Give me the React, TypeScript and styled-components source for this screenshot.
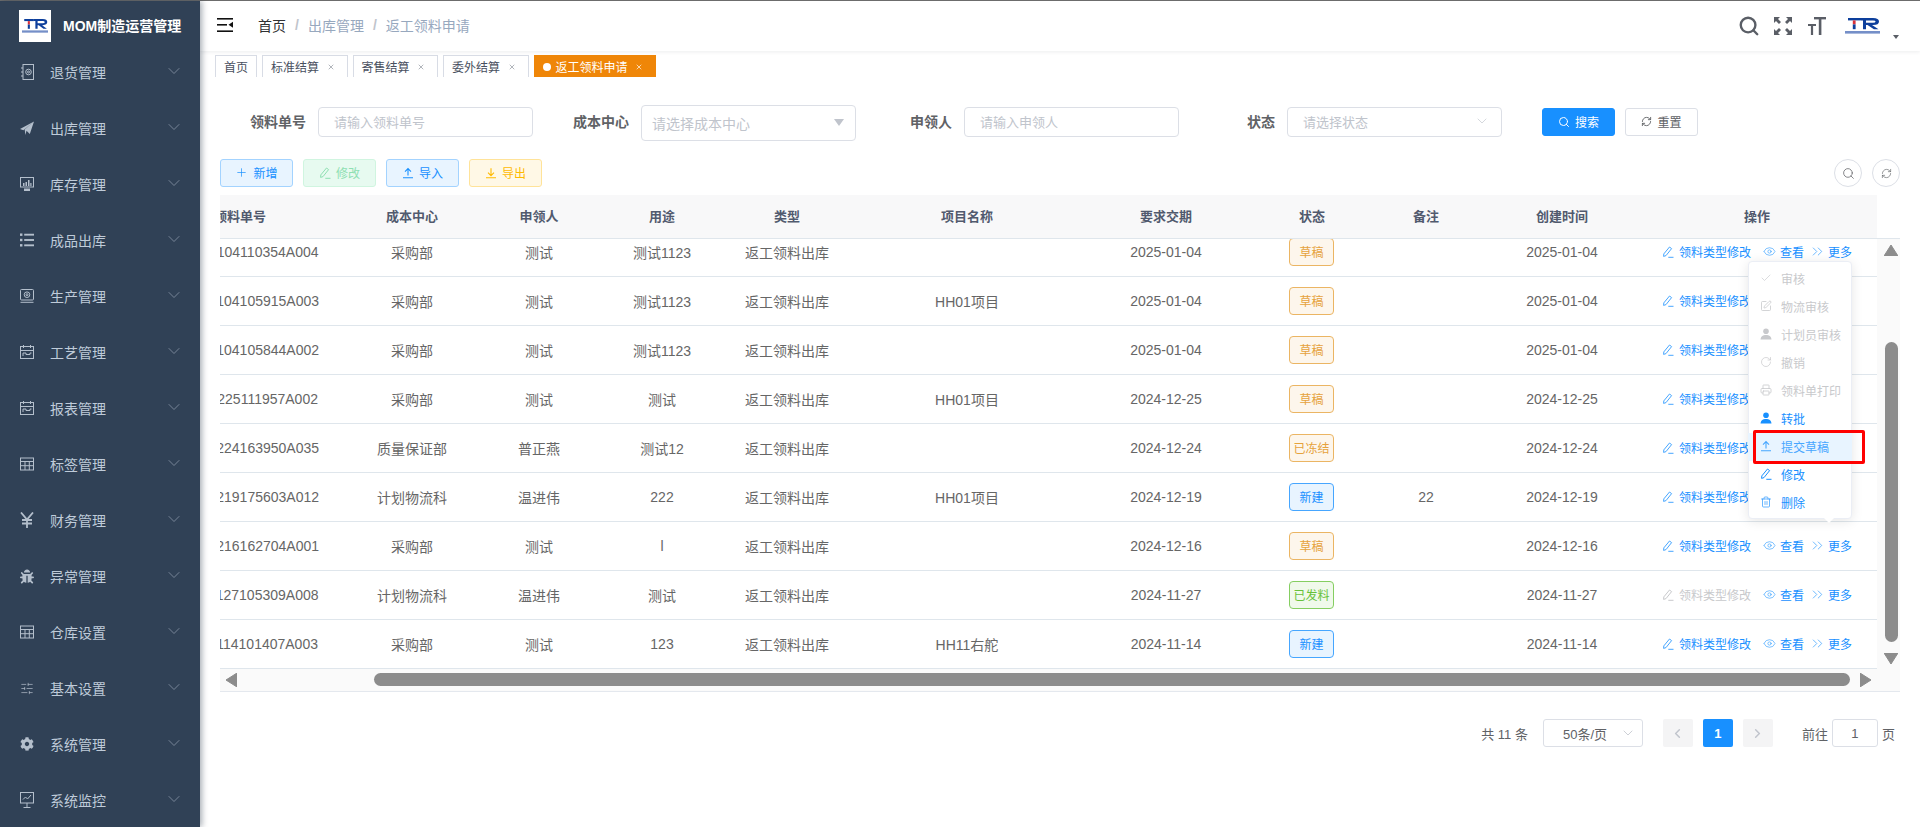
import React from "react";
import styled, { createGlobalStyle } from "styled-components";
import {
  Search, RefreshCw, ChevronDown, ChevronLeft, ChevronRight, ChevronsRight, Eye, Plus, X,
  Check, SquarePen, RotateCw, Printer, Trash2, SlidersHorizontal,
} from "lucide-react";
import { FaCog, FaBug } from "react-icons/fa";

const Global = createGlobalStyle`
  html, body { margin: 0; padding: 0; height: 100%; background: #fff; }
  body { font-family: "Liberation Sans", "Noto Sans CJK SC", sans-serif; font-size: 14px; color: #606266; }
  * { box-sizing: border-box; }
`;

const Root = styled.div`
  position: relative; height: 100vh; overflow: hidden; display: flex; flex-direction: column;
`;
const TopLine = styled.div`height: 1px; background: #6e6e6e; flex: none;`;
const Shell = styled.div`flex: 1; display: flex; min-height: 0;`;

/* sidebar */
const Sidebar = styled.aside`
  width: 200px; flex: none; background: #304156; position: relative; z-index: 2;
  box-shadow: 2px 0 6px rgba(0, 21, 41, .35); overflow: hidden;
`;
const Brand = styled.div`height: 44px; display: flex; align-items: center; padding: 6px 0 0 19px; gap: 12px;`;
const BrandBox = styled.div`width: 32px; height: 32px; background: #fff; display: flex; align-items: center; justify-content: center;`;
const BrandName = styled.div`color: #fff; font-weight: 700; font-size: 14px; white-space: nowrap; line-height: 20px;`;
const MenuItem = styled.div`
  height: 56px; display: flex; align-items: center; padding: 0 16px 0 20px; color: #bfcbd9; font-size: 14px;
`;
const MenuGlyph = styled.span`width: 14px; height: 14px; margin: -2px 16px 0 0; display: flex; align-items: center; justify-content: center; color: #b4bfcc; flex: none;`;
const MenuLabel = styled.span`flex: 1; margin-top: -2px;`;
const MenuArrow = styled(ChevronDown)`color: #8492a3; margin-bottom: 5px;`;

/* main */
const Main = styled.main`flex: 1; min-width: 0; display: flex; flex-direction: column;`;
const TopBar = styled.header`
  height: 50px; flex: none; display: flex; align-items: center; padding: 0 21px 2px 17px; background: #fff;
  box-shadow: 0 1px 4px rgba(0, 21, 41, .08); position: relative; z-index: 1;
`;
const Crumbs = styled.nav`display: flex; align-items: center; margin-left: 25px; font-size: 14px; flex: 1;`;
const Crumb = styled.span<{ $strong?: boolean }>`color: ${p => (p.$strong ? "#303133" : "#97a8be")};`;
const CrumbSep = styled.span`margin: 0 9px; color: #c0c4cc; font-weight: 700;`;
const HeadTools = styled.div`display: flex; align-items: center; gap: 16px; color: #5a5e66; margin-top: 2px;`;
const HeadSearch = styled(Search)`margin: -2px;`;
const HeadLogo = styled.div`margin-left: 3px; display: flex;`;
const HeadCaret = styled.span`
  width: 0; height: 0; border-left: 3.5px solid transparent; border-right: 3.5px solid transparent;
  border-top: 4px solid #5a5e66; margin: 22px 0 0 -3px;
`;

const TagBar = styled.div`
  height: 33px; flex: none; background: #fff; padding: 4px 0 0 15px; display: flex; align-items: flex-start; gap: 5px;
  box-shadow: 0 1px 3px rgba(0, 21, 41, .16), 0 0 3px rgba(0, 0, 0, .03);
`;
const Tab = styled.div<{ $active?: boolean }>`
  height: 22px; display: flex; align-items: center; font-size: 12px; padding: 0 8px;
  border: 1px solid ${p => (p.$active ? "#ef8608" : "#d8dce5")}; border-bottom: none;
  background: ${p => (p.$active ? "#ef8608" : "#fff")}; color: ${p => (p.$active ? "#fff" : "#495060")};
`;
const TabDot = styled.span`width: 8px; height: 8px; border-radius: 50%; background: #fff; margin-right: 5px;`;
const TabClose = styled.span<{ $active?: boolean }>`
  width: 16px; margin-left: 3.5px; display: flex; justify-content: center; color: ${p => (p.$active ? "#fff" : "#8a8f99")};
`;

const Content = styled.section`flex: 1; min-height: 0; padding: 0 20px; background: #fff;`;
const SearchRow = styled.form`height: 36px; margin-top: 20px; display: flex; align-items: center;`;
const FieldLabel = styled.label<{ $w: number }>`
  width: ${p => p.$w}px; text-align: right; font-weight: 700; font-size: 14px; color: #606266; margin-right: 12px; flex: none; padding-bottom: 2px;
`;
const InputBox = styled.div<{ $tall?: boolean; $size?: number }>`
  width: 215px; height: ${p => (p.$tall ? 36 : 30)}px; border: 1px solid #dcdfe6; border-radius: 4px; display: flex; align-items: center;
  justify-content: space-between; padding: 0 11px ${p => (p.$tall ? 1 : 2)}px ${p => (p.$tall ? 10 : 15)}px;
  margin-top: ${p => (p.$tall ? 2 : 0)}px;
  color: #c0c4cc; font-size: ${p => p.$size ?? 13}px; background: #fff; flex: none;
`;
const TinyCaret = styled.span`
  width: 0; height: 0; border-left: 5px solid transparent; border-right: 5px solid transparent; border-top: 7px solid #c0c4cc;
`;
const Action = styled.button<{ $bg: string; $bd: string; $fg: string }>`
  width: 73px; height: 28px; border: 1px solid ${p => p.$bd}; background: ${p => p.$bg}; color: ${p => p.$fg};
  border-radius: 3px; font: inherit; font-size: 12px; display: inline-flex; align-items: center; justify-content: center; gap: 5px; padding: 0 0 1px;
  flex: none;
`;
const SearchAction = styled(Action)`margin-left: 40px;`;
const ResetAction = styled(Action)`margin-left: 10px;`;
const Toolbar = styled.div`height: 28px; margin-top: 19px; display: flex; align-items: center; gap: 10px;`;
const RoundBtn = styled.button`
  width: 28px; height: 28px; border: 1px solid #dcdfe6; border-radius: 50%; background: #fff; color: #606266;
  display: inline-flex; align-items: center; justify-content: center; padding: 0;
`;
const ToolSpacer = styled.div`flex: 1;`;

/* table */
const TableFrame = styled.div`
  margin-top: 8px; display: grid; grid-template-columns: 1657px 23px; grid-template-rows: 44px 430px 23px;
`;
const HeadClip = styled.div`grid-column: 1; grid-row: 1; overflow: hidden; background: #f8f8f9; border-bottom: 1px solid #dfe6ec;`;
const HeadGutter = styled.div`grid-column: 2; grid-row: 1; border-bottom: 1px solid #dfe6ec;`;
const BodyClip = styled.div`grid-column: 1; grid-row: 2; overflow: hidden;`;
const GridTable = styled.table<{ $top?: number }>`
  width: 1754px; table-layout: fixed; border-collapse: separate; border-spacing: 0;
  margin-left: -97px; margin-top: ${p => p.$top ?? 0}px;
`;
const Th = styled.th`
  height: 43px; padding: 0 0 2px; text-align: center; font-size: 13px; font-weight: 700; color: #515a6e;
`;
const Td = styled.td`
  height: 49px; padding: 0 0 1px; text-align: center; font-size: 14px; color: #666; border-bottom: 1px solid #dfe6ec; white-space: nowrap;
`;
const StatusTag = styled.span<{ $bg: string; $fg: string; $bd: string }>`
  display: inline-flex; align-items: center; justify-content: center; width: 45px; height: 28px; font-size: 12px; margin-left: -1px;
  border: 1px solid ${p => p.$bd}; background: ${p => p.$bg}; color: ${p => p.$fg}; border-radius: 4px; vertical-align: middle;
`;
const RowOps = styled.div`display: flex; justify-content: center; align-items: center; gap: 12px; font-size: 12px;`;
const RowLink = styled.span<{ $off?: boolean }>`
  display: inline-flex; align-items: center; gap: 4px; color: ${p => (p.$off ? "#c8c9cc" : "#1890ff")};
  svg { color: ${p => (p.$off ? "#c8c9cc" : "#46a6ff")}; }
`;
const RowChevrons = styled(ChevronsRight)`margin: 0 -2px 0 -7px;`;
const RowPencil = styled.span`display: flex; margin-right: 1px;`;

const VTrack = styled.div`
  grid-column: 2; grid-row: 2 / 4; background: #fafafa; border-bottom: 1px solid #e4e8ee; display: flex; flex-direction: column; align-items: center; padding: 6px 0 0 5px;
`;
const VThumb = styled.div`width: 13px; height: 300px; margin: 86px 0 11px; border-radius: 7px; background: #8c8c8c;`;
const HTrack = styled.div`
  grid-column: 1; grid-row: 3; background: #fafafa; border-bottom: 1px solid #e4e8ee; display: flex; align-items: center; padding: 0 6px 1px 6px;
`;
const HThumb = styled.div`height: 13px; width: 1476px; margin: 0 10px 0 137px; border-radius: 7px; background: #8c8c8c;`;

/* pager */
const Pager = styled.div`
  margin-top: 27px; height: 28px; padding-right: 5px; display: flex; justify-content: flex-end; align-items: center; font-size: 13px; color: #606266;
`;
const PageSize = styled.div`
  width: 100px; height: 28px; margin: 0 20px 0 15px; border: 1px solid #dcdfe6; border-radius: 3px; display: flex; align-items: center;
  justify-content: space-between; padding: 0 6px 0 19px; color: #606266; svg { color: #c0c4cc; }
`;
const PageBtn = styled.div<{ $on?: boolean }>`
  width: 30px; height: 28px; border-radius: 2px; margin-right: 10px; display: flex; align-items: center; justify-content: center;
  font-weight: 700; background: ${p => (p.$on ? "#1890ff" : "#f4f4f5")}; color: ${p => (p.$on ? "#fff" : "#c0c4cc")};
`;
const JumpLabel = styled.span`margin-left: 19px;`;
const JumpBox = styled.div`
  width: 46px; height: 28px; margin: 0 4px; border: 1px solid #dcdfe6; border-radius: 3px; display: flex; align-items: center; justify-content: center;
`;

/* dropdown */
const Dropdown = styled.div`
  position: absolute; left: 1748px; top: 261px; width: 104px; height: 258px; padding: 3px 0; z-index: 5; background: #fff;
  border: 1px solid #ebeef5; border-radius: 4px; box-shadow: 0 2px 12px rgba(0, 0, 0, .1);
  &::after {
    content: ""; position: absolute; left: 75px; bottom: -5px; width: 0; height: 0;
    border-left: 5px solid transparent; border-right: 5px solid transparent; border-top: 5px solid #fff;
  }
`;
const DropItem = styled.div<{ $off?: boolean; $hover?: boolean }>`
  height: 28px; margin: 0 -1px; padding: 0 0 2px 12px; display: flex; align-items: center; gap: 9px; font-size: 12px;
  color: ${p => (p.$off ? "#c8c9cc" : p.$hover ? "#46a6ff" : "#1890ff")}; background: ${p => (p.$hover ? "#e8f4ff" : "transparent")};
  svg { flex: none; }
`;
const Annotation = styled.div`
  position: absolute; left: 1753px; top: 430px; width: 112px; height: 34px; z-index: 6; border: 3px solid #f00; border-radius: 2px;
`;

/* drawings */
const Logo = ({ w, h }: { w: number; h: number }) => (
  <svg width={w} height={h} viewBox="0 0 35 16" preserveAspectRatio="none">
    <rect x="3" y="0" width="13" height="2.400" fill="#0d3f9c" />
    <rect x="7.800" y="2.400" width="2.800" height="4" fill="#d8323c" />
    <rect x="7.800" y="6.400" width="2.800" height="4.800" fill="#0d3f9c" />
    <path fillRule="evenodd" d="M16 0h12q6 0 6 3.500t-6 3.500h-1l6.500 4.200h-4.600L22.500 7H21v4.200h-3V2.400h-2zM21 2.400v2.400h7q2.600 0 2.600-1.200T28 2.400z" fill="#0d3f9c" />
    <rect x="0" y="13" width="35" height="2.600" fill="#3a5fb0" opacity=".7" />
  </svg>
);
const Hamburger = () => (
  <svg width="16" height="14" viewBox="0 0 16 14" fill="#111">
    <rect width="16" height="1.600" />
    <rect y="6" width="10" height="1.600" />
    <path d="M16 3.800v6L11.500 6.800z" />
    <rect y="12.400" width="16" height="1.600" />
  </svg>
);
const Fullscreen = () => (
  <svg width="18" height="18" viewBox="0 0 18 18" fill="currentColor">
    <path d="M0 0h6L4 2l3 3-2 2-3-3-2 2zM18 0v6l-2-2-3 3-2-2 3-3-2-2zM0 18v-6l2 2 3-3 2 2-3 3 2 2zM18 18h-6l2-2-3-3 2-2 3 3 2-2z" />
  </svg>
);
const TextSize = () => (
  <svg width="18" height="18" viewBox="0 0 18 18" fill="currentColor">
    <rect x="6" y="0" width="12" height="2.400" /><rect x="10.800" y="0" width="2.600" height="18" />
    <rect x="0" y="7" width="8" height="2" /><rect x="2.900" y="7" width="2.200" height="11" />
  </svg>
);
const Pencil = ({ s = 12 }: { s?: number }) => (
  <svg width={s} height={s} viewBox="0 0 12 12" fill="none" stroke="currentColor" strokeWidth="1">
    <path d="M7.500 1 L9.600 2.600 L4 9.600 L1.600 10.400 L1.800 7.900 Z" /><path d="M6.300 11.300h5.200" />
  </svg>
);
const Upload = ({ s = 12 }: { s?: number }) => (
  <svg width={s} height={s} viewBox="0 0 12 12" fill="none" stroke="currentColor" strokeWidth="1.100">
    <path d="M1 10.800h10M6 8.600V2M3 4.600 6 1.600l3 3" />
  </svg>
);
const Download = ({ s = 12 }: { s?: number }) => (
  <svg width={s} height={s} viewBox="0 0 12 12" fill="none" stroke="currentColor" strokeWidth="1.100">
    <path d="M1 10.800h10M6 1.200v7M3 5.600l3 3 3-3" />
  </svg>
);
const User = () => (
  <svg width="12" height="12" viewBox="0 0 12 12" fill="currentColor">
    <circle cx="6" cy="3.300" r="2.800" /><path d="M0.500 11.500C1 8 3 7 6 7s5 1 5.500 4.500z" />
  </svg>
);

const line = { fill: "none", stroke: "currentColor", strokeWidth: 1 } as const;
const IconSafe = () => (
  <svg width="14" height="16" viewBox="0 0 14 16" {...line}>
    <rect x="3" y=".5" width="10.500" height="15" /><circle cx="8.500" cy="8" r="2.800" /><circle cx="8.500" cy="8" r="1" />
    <path d="M1 4h2M1 8h2M1 12h2" />
  </svg>
);
const IconPlane = () => (
  <svg width="15" height="15" viewBox="0 0 15 15" fill="currentColor"><path d="M15 0 10.500 13.500 7 10l-1.200 4.500L5 8.500zM15 0 0 8l3.600 1.300z" /></svg>
);
const IconMonitor = () => (
  <svg width="14" height="14" viewBox="0 0 14 14" fill="currentColor">
    <path fillRule="evenodd" d="M0 0h14v10.500H0zM1 1v8.500h12V1z" /><path d="M3 6h1.500v3H3zM5.500 5H7v4H5.500zM8 3h1.500v6H8zM10.300 6h1.200v3h-1.200zM4 11.500h6V14H4z" />
  </svg>
);
const IconList = () => (
  <svg width="15" height="14" viewBox="0 0 15 14" fill="currentColor">
    <rect y="0" width="2.600" height="2.600" /><rect y="5.700" width="2.600" height="2.600" /><rect y="11.400" width="2.600" height="2.600" />
    <rect x="4.500" y=".3" width="10.500" height="2" /><rect x="4.500" y="6" width="10.500" height="2" /><rect x="4.500" y="11.700" width="10.500" height="2" />
  </svg>
);
const IconProd = () => (
  <svg width="14" height="14" viewBox="0 0 14 14" {...line}>
    <rect x=".5" y=".5" width="13" height="10.500" rx="1" /><circle cx="7" cy="5.700" r="2.800" /><circle cx="7" cy="5.700" r="1" /><path d="M.5 13.300h13" />
  </svg>
);
const IconCal = () => (
  <svg width="14" height="14" viewBox="0 0 14 14" {...line}>
    <rect x=".5" y="1.500" width="13" height="12" /><path d="M.5 5.500h13M3.500 0v3M10.500 0v3M3 11V8h3v1.500h4V8h1.500" />
  </svg>
);
const IconGrid = () => (
  <svg width="14" height="14" viewBox="0 0 14 14" {...line}>
    <rect x=".5" y="1" width="13" height="12" /><path d="M.5 4.500h13M.5 8.700h13M5 4.500V13M9.300 4.500V13" />
  </svg>
);
const IconYen = () => (
  <svg width="14" height="16" viewBox="0 0 14 16" fill="none" stroke="currentColor" strokeWidth="1.800">
    <path d="M1 0.500 7 7.500l6-7M7 7.500V16M2 8h10M2 11.500h10" />
  </svg>
);
const IconChart = () => (
  <svg width="14" height="16" viewBox="0 0 14 16" {...line}>
    <rect x=".5" y=".5" width="13" height="10.500" /><path d="M3 7.500l2.500-2.500 2 2 3.500-4M7 11v4M3.500 15.500h7" />
  </svg>
);

const menus: [string, React.ReactNode][] = [
  ["退货管理", <IconSafe />], ["出库管理", <IconPlane />], ["库存管理", <IconMonitor />], ["成品出库", <IconList />],
  ["生产管理", <IconProd />], ["工艺管理", <IconCal />], ["报表管理", <IconCal />], ["标签管理", <IconGrid />],
  ["财务管理", <IconYen />], ["异常管理", <FaBug size={15} />], ["仓库设置", <IconGrid />],
  ["基本设置", <SlidersHorizontal size={17} strokeWidth={1.2} />], ["系统管理", <FaCog size={16} />], ["系统监控", <IconChart />],
];

const cols = [234, 110, 144, 102, 148, 212, 186, 106, 122, 150, 240];
const heads = ["领料单号", "成本中心", "申领人", "用途", "类型", "项目名称", "要求交期", "状态", "备注", "创建时间", "操作"];
const Cols = () => <colgroup>{cols.map((w, i) => <col key={i} style={{ width: w }} />)}</colgroup>;

type Row = { no: string; dept: string; who: string; use: string; proj: string; due: string; st: string; note?: string; off?: boolean };
const rows: Row[] = [
  { no: "FL20250104110354A004", dept: "采购部", who: "测试", use: "测试1123", proj: "", due: "2025-01-04", st: "草稿" },
  { no: "FL20250104105915A003", dept: "采购部", who: "测试", use: "测试1123", proj: "HH01项目", due: "2025-01-04", st: "草稿" },
  { no: "FL20250104105844A002", dept: "采购部", who: "测试", use: "测试1123", proj: "", due: "2025-01-04", st: "草稿" },
  { no: "FL20241225111957A002", dept: "采购部", who: "测试", use: "测试", proj: "HH01项目", due: "2024-12-25", st: "草稿" },
  { no: "FL20241224163950A035", dept: "质量保证部", who: "普正燕", use: "测试12", proj: "", due: "2024-12-24", st: "已冻结" },
  { no: "FL20241219175603A012", dept: "计划物流科", who: "温进伟", use: "222", proj: "HH01项目", due: "2024-12-19", st: "新建", note: "22" },
  { no: "FL20241216162704A001", dept: "采购部", who: "测试", use: "l", proj: "", due: "2024-12-16", st: "草稿" },
  { no: "FL20241127105309A008", dept: "计划物流科", who: "温进伟", use: "测试", proj: "", due: "2024-11-27", st: "已发料", off: true },
  { no: "FL20241114101407A003", dept: "采购部", who: "测试", use: "123", proj: "HH11右舵", due: "2024-11-14", st: "新建" },
];
const tone: Record<string, [string, string, string]> = {
  草稿: ["#fdf6ec", "#e6a23c", "#ebb563"], 已冻结: ["#fdf6ec", "#e6a23c", "#ebb563"],
  新建: ["#e8f4ff", "#1890ff", "#46a6ff"], 已发料: ["#f0f9eb", "#67c23a", "#85ce61"],
};
const Tri = ({ d }: { d: "up" | "down" | "left" | "right" }) => {
  const p = { up: "M7 0 14 11H0z", down: "M0 0h14L7 11z", left: "M11 0v14L0 7z", right: "M0 0v14L11 7z" }[d];
  const wide = d === "up" || d === "down";
  return (
    <svg width={wide ? 14 : 11} height={wide ? 11 : 14} viewBox={wide ? "0 0 14 11" : "0 0 11 14"} style={{ flex: "none" }}>
      <path d={p} fill="#8c8c8c" stroke="#8c8c8c" strokeLinejoin="round" strokeWidth="1" />
    </svg>
  );
};

export default function App() {
  return (
    <Root>
      <Global />
      <TopLine />
      <Shell>
        <Sidebar>
          <Brand>
            <BrandBox><Logo w={26} h={14} /></BrandBox>
            <BrandName>MOM制造运营管理</BrandName>
          </Brand>
          {menus.map(([t, ic]) => (
            <MenuItem key={t}>
              <MenuGlyph>{ic}</MenuGlyph>
              <MenuLabel>{t}</MenuLabel>
              <MenuArrow size={20} strokeWidth={1} />
            </MenuItem>
          ))}
        </Sidebar>
        <Main>
          <TopBar>
            <Hamburger />
            <Crumbs>
              <Crumb $strong>首页</Crumb><CrumbSep>/</CrumbSep>
              <Crumb>出库管理</Crumb><CrumbSep>/</CrumbSep>
              <Crumb>返工领料申请</Crumb>
            </Crumbs>
            <HeadTools>
              <HeadSearch size={22} strokeWidth={2.6} />
              <Fullscreen />
              <TextSize />
              <HeadLogo><Logo w={35} h={16} /></HeadLogo>
              <HeadCaret />
            </HeadTools>
          </TopBar>
          <TagBar>
            <Tab>首页</Tab>
            {["标准结算", "寄售结算", "委外结算"].map(t => (
              <Tab key={t}>{t}<TabClose><X size={8} strokeWidth={2} /></TabClose></Tab>
            ))}
            <Tab $active><TabDot />返工领料申请<TabClose $active><X size={8} strokeWidth={2} /></TabClose></Tab>
          </TagBar>
          <Content>
            <SearchRow>
              <FieldLabel $w={86}>领料单号</FieldLabel>
              <InputBox>请输入领料单号</InputBox>
              <FieldLabel $w={96}>成本中心</FieldLabel>
              <InputBox $tall $size={14}>请选择成本中心<TinyCaret /></InputBox>
              <FieldLabel $w={96}>申领人</FieldLabel>
              <InputBox>请输入申领人</InputBox>
              <FieldLabel $w={96}>状态</FieldLabel>
              <InputBox>请选择状态<ChevronDown size={16} strokeWidth={1} /></InputBox>
              <SearchAction type="button" $bg="#1890ff" $bd="#1890ff" $fg="#fff"><Search size={12} />搜索</SearchAction>
              <ResetAction type="button" $bg="#fff" $bd="#dcdfe6" $fg="#606266"><RefreshCw size={11} />重置</ResetAction>
            </SearchRow>
            <Toolbar>
              <Action $bg="#e8f4ff" $bd="#a3d3ff" $fg="#1890ff"><Plus size={13} strokeWidth={1.3} />新增</Action>
              <Action $bg="#e7faf0" $bd="#d0f5e0" $fg="#8ee0b2"><Pencil />修改</Action>
              <Action $bg="#e8f4ff" $bd="#a3d3ff" $fg="#1890ff"><Upload />导入</Action>
              <Action $bg="#fff8e6" $bd="#ffe399" $fg="#ffba00"><Download />导出</Action>
              <ToolSpacer />
              <RoundBtn><Search size={13} strokeWidth={1.4} /></RoundBtn>
              <RoundBtn><RefreshCw size={11} strokeWidth={1.4} /></RoundBtn>
            </Toolbar>
            <TableFrame>
              <HeadClip>
                <GridTable>
                  <Cols />
                  <thead><tr>{heads.map(h => <Th key={h}>{h}</Th>)}</tr></thead>
                </GridTable>
              </HeadClip>
              <HeadGutter />
              <BodyClip>
                <GridTable $top={-11}>
                  <Cols />
                  <tbody>
                    {rows.map(r => (
                      <tr key={r.no}>
                        <Td>{r.no}</Td><Td>{r.dept}</Td><Td>{r.who}</Td><Td>{r.use}</Td><Td>返工领料出库</Td><Td>{r.proj}</Td>
                        <Td>{r.due}</Td>
                        <Td><StatusTag $bg={tone[r.st][0]} $fg={tone[r.st][1]} $bd={tone[r.st][2]}>{r.st}</StatusTag></Td>
                        <Td>{r.note}</Td><Td>{r.due}</Td>
                        <Td>
                          <RowOps>
                            <RowLink $off={r.off}><RowPencil><Pencil /></RowPencil>领料类型修改</RowLink>
                            <RowLink><Eye size={13} strokeWidth={1.3} />查看</RowLink>
                            <RowLink><RowChevrons size={17} strokeWidth={1.1} />更多</RowLink>
                          </RowOps>
                        </Td>
                      </tr>
                    ))}
                  </tbody>
                </GridTable>
              </BodyClip>
              <VTrack><Tri d="up" /><VThumb /><Tri d="down" /></VTrack>
              <HTrack><Tri d="left" /><HThumb /><Tri d="right" /></HTrack>
            </TableFrame>
            <Pager>
              <span>共 11 条</span>
              <PageSize>50条/页<ChevronDown size={16} strokeWidth={1.2} /></PageSize>
              <PageBtn><ChevronLeft size={15} strokeWidth={2.4} /></PageBtn>
              <PageBtn $on>1</PageBtn>
              <PageBtn><ChevronRight size={15} strokeWidth={2.4} /></PageBtn>
              <JumpLabel>前往</JumpLabel>
              <JumpBox>1</JumpBox>
              <span>页</span>
            </Pager>
          </Content>
        </Main>
      </Shell>
      <Dropdown>
        <DropItem $off><Check size={12} strokeWidth={1.3} />审核</DropItem>
        <DropItem $off><SquarePen size={12} strokeWidth={1.6} />物流审核</DropItem>
        <DropItem $off><User />计划员审核</DropItem>
        <DropItem $off><RotateCw size={12} strokeWidth={1.4} />撤销</DropItem>
        <DropItem $off><Printer size={12} strokeWidth={1.6} />领料单打印</DropItem>
        <DropItem><User />转批</DropItem>
        <DropItem $hover><Upload />提交草稿</DropItem>
        <DropItem><Pencil />修改</DropItem>
        <DropItem><Trash2 size={12} strokeWidth={1.3} />删除</DropItem>
      </Dropdown>
      <Annotation />
    </Root>
  );
}
